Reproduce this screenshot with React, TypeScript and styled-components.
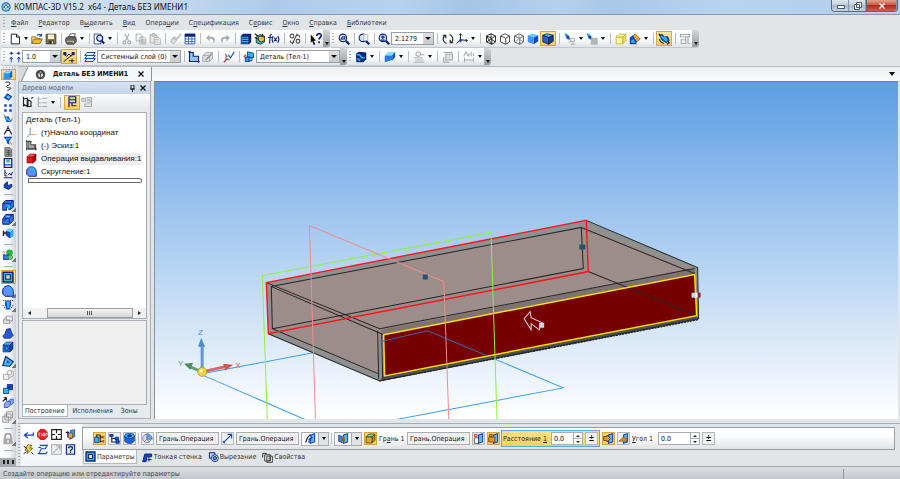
import React from "react";
import styled, { createGlobalStyle, css } from "styled-components";

const Global = createGlobalStyle`
  * { box-sizing: border-box; }
  body { margin: 0; font-family: "DejaVu Sans Condensed", "DejaVu Sans", sans-serif; font-size: 7px; line-height: 10px; color: #222; }
  button, input, select { font: inherit; color: inherit; margin: 0; padding: 0; border: 0; background: none; border-radius: 0; min-width: 0; }
`;

/* ---------- icons ---------- */
const B = "#1546c8";
const N = "#0b2278";
const C = "#25b9f2";
const G = "#a9acb0";
const K = "#222";

const cube = (a: string, b: string, c: string, s = N) => (
  <g stroke={s} strokeWidth="1" strokeLinejoin="round">
    <path d="M1.5 5.5h9v9h-9z" fill={b} />
    <path d="M1.5 5.5l4-4h9l-4 4z" fill={a} />
    <path d="M10.5 5.5l4-4v9l-4 4z" fill={c} />
  </g>
);
const wire = (s: string, inner: React.ReactNode) => (
  <g stroke={s} strokeWidth="1.2" fill="none">
    <path d="M2 4l6-3 6 3v8l-5 3-7-3zM2 4l7 3 5-3M9 7v8" />{inner}
  </g>
);
const lens = (inner: React.ReactNode) => (
  <g fill="none" stroke={N} strokeWidth="1.4">
    <path d="M10.5 10.5L15 15" strokeWidth="3" />
    <circle cx="6.5" cy="6.5" r="5" fill="#cfe6fb" />{inner}
  </g>
);
const arrowPlane = (extra: React.ReactNode) => (
  <g>
    <path d="M8 3l6-2v12l-6 2z" fill="#5ab3ff" stroke={B} strokeWidth="1.5" />{extra}
  </g>
);

const icons: Record<string, React.ReactNode> = {
  logo: <g><circle cx="8" cy="8" r="7.5" fill="#1b76b8" /><circle cx="8" cy="8" r="5" fill="none" stroke="#fff" /><path d="M5 5l3 3 3-3M8 8v4M5 11l3-3 3 3" stroke="#fff" strokeWidth="1.4" fill="none" /></g>,
  newDoc: <path d="M3 1.5h7l4 4v9H3zM10 1.5v4h4" fill="#fff" stroke={K} strokeWidth="1.3" />,
  open: <g stroke="#7a5c10"><path d="M1 14V5h5l1 2h5v2" fill="#f6dd7a" /><path d="M1 14l3-6h11l-3 6z" fill="#e6b730" /><path d="M8 3c3-2 5-1 6 1m0-3v3h-3" fill="none" stroke={B} strokeWidth="1.5" /></g>,
  save: <g><path d="M1.5 1.5h13v13h-13z" fill="#8d7a35" stroke="#333" /><path d="M4 2h8v6H4z" fill="#f4f0d8" /><path d="M5 10h7v4H5z" fill="#333" /><path d="M9 11h2v3H9z" fill="#eee" /></g>,
  print: <g stroke="#333"><path d="M5 5l2-4h7l-2 4z" fill="#fff" /><path d="M1 7l3-2h10l1 3v4l-3 3H3l-2-3z" fill="#666" /><path d="M2 11h9" stroke="#ddd" /><path d="M10 12h2" stroke="#e5c733" strokeWidth="2" /></g>,
  preview: <g><path d="M1.5 1.5h9v13h-9z" fill="#fff" stroke={N} /><circle cx="9" cy="7" r="4" fill="#cce4fa" stroke={N} strokeWidth="1.5" /><path d="M11 10l4 4" stroke={N} strokeWidth="2.6" /></g>,
  cut: <g stroke={G} fill="none" strokeWidth="1.5"><path d="M5 1l5 9M11 1L6 10" /><circle cx="4.5" cy="12.5" r="2" /><circle cx="11" cy="12.5" r="2" /></g>,
  copy: <g stroke={G} fill="#f5f5f5" strokeWidth="1.3"><path d="M1.5 1.5h6l2 2v7h-8zM6.5 5.5h6l2 2v7h-8z" /><path d="M8 9h5M8 11h5M8 13h5" /></g>,
  paste: <g stroke={G} fill="#e7e7e7" strokeWidth="1.3"><path d="M1.5 2.5h9v11h-9z" /><path d="M4 1h4v3H4z" /><path d="M7 6h6l2 2v7H7z" fill="#f8f8f8" /><path d="M8 9h5M8 12h5" /></g>,
  brush: <g stroke={G} fill="#ddd"><path d="M10 6l4-5 1 1-4 5z" /><path d="M3 7l6 2 2-2-5-2z" /><path d="M3 7l-2 5 4 3 4-6z" /></g>,
  table: <g><path d="M1.5 1.5h13v13h-13z" fill="#fff" stroke={B} /><path d="M1 1h14v4H1z" fill={N} /><path d="M6 5v10M10.5 5v10M1 8h14M1 11.5h14" stroke={B} /></g>,
  undo: <path d="M6 2L1.5 6.5 6 11V8c4-1 6 1 5 6 5-6 1-10-5-9z" fill={G} />,
  redo: <path d="M10 2l4.5 4.5L10 11V8c-4-1-6 1-5 6-5-6-1-10 5-9z" fill={G} />,
  manager: <g><path d="M1 4l3-3h11v11l-3 3H1z" fill={N} /><path d="M2 5h9v9H2z" fill={C} /><path d="M3 7h7M3 10h7M3 13h7" stroke={N} strokeWidth="1.5" /></g>,
  lib: <g stroke={K}><path d="M3 5l5-3 6 2v8l-5 3-6-2z" fill="#30b5c7" /><path d="M6 5l4-1 4 2v4l-4 2-4-2z" fill="#f0bf2d" /><path d="M1 1l4 3M1 6l4 2M12 1l-2 4" strokeWidth="1.5" /></g>,
  fx: <g fill="none" stroke={N} strokeWidth="1.5"><path d="M5 2c-3-1-2 4-3 12M0 6h5M7 4c-2 3-2 6 0 9M8 6l4 5M12 6l-4 5M13 4c2 3 2 6 0 9" /></g>,
  percent: <g fill="none" stroke="#444" strokeWidth="1.4"><circle cx="4" cy="4" r="2.5" /><circle cx="12" cy="11" r="2.5" /><path d="M11 1L4 15M9 4c3-3 6 0 5 2M7 12c-3 3-6 0-5-2" /></g>,
  help: <g><path d="M1 2l7 8-3 .5L7 15l-2 1-2-5-2 2z" fill="#111" /><path d="M9 4c0-4 6-4 6-.5 0 2.5-3 2.5-3 5M12 11v2.5" stroke={N} strokeWidth="2.2" fill="none" /></g>,
  zoomWin: lens(<path d="M4 8h5V5H6.5z" />),
  zoomPage: <g>{lens(null)}<path d="M7 2h6v8H7z" fill="#eee" stroke={G} /></g>,
  zoomPm: lens(<path d="M4 5.5h5M6.5 3v5M4 9.5h5" />),
  rotate: <g fill="none" stroke={K} strokeWidth="1.6"><path d="M6 14C1 12 0 6 4 3M10 2c5 2 6 8 2 11" /><path d="M1 3h4v4M15 13h-4V9" /></g>,
  axes: <g fill="none" stroke={K} strokeWidth="1.3"><path d="M6 1v8l9 1M6 9l-5 5M4 3l2-2 2 2M13 8l2 2-2 2" /><circle cx="6" cy="10" r="1.5" fill={B} stroke={B} /></g>,
  wire1: wire(K, <path d="M8 1v7l-6 4M8 8l6 4M2 4l7 11" />),
  wire2: wire("#444", null),
  wire3: wire("#555", <path d="M8 1v7l-6 4M8 8l6 4" stroke="#999" />),
  shaded: <g><path d="M1 3l6-2 8 2-6 3z" fill="#5ed0ff" /><path d="M1 3l8 3v9l-8-3z" fill="#4390ff" /><path d="M9 6l6-3v8l-6 4z" fill="#1647c4" /></g>,
  shadedEdge: <g stroke="#08184a" strokeLinejoin="round"><path d="M1 3l6-2 8 2-6 3z" fill="#35c4f4" /><path d="M1 3l8 3v9l-8-3z" fill="#1e62dd" /><path d="M9 6l6-3v8l-6 4z" fill="#133a9c" /></g>,
  light: <g><path d="M1 1l6 3 1 5-4-1z" fill={B} /><path d="M1 1l4 2" stroke={C} strokeWidth="2" /><path d="M6 12h4M9 7h5v4H9zM12 11v4M9 15h6" stroke={G} fill="none" strokeWidth="1.3" /></g>,
  lightCube: <g><path d="M1 1l6 3 1 5-4-1z" fill={B} /><path d="M1 1l4 2" stroke={C} strokeWidth="2" /><path d="M7 7h8v8H7z" fill="#b6b6b6" stroke={G} /></g>,
  yellowCube: cube("#fbf594", "#fdf7a8", "#f1e561", "#c2ab20"),
  section: <g><path d="M5 5l3-4 7 7-5 4z" fill="#e8a52b" stroke="#8a5a10" /><path d="M1 6l4-3 5 8v4H1z" fill={B} /><path d="M3 10l3-2 2 5H3z" fill={C} /></g>,
  simplify: <g><path d="M2 3l4-1 2 3 5 0 2 5-4 3-6-4z" fill={B} stroke={N} /><path d="M4 4l8 7M8 5l4 4" stroke={C} strokeWidth="2.5" /><path d="M13 11l2 2-3 2M2 8c0 4 3 5 6 6M1 1l3 3" stroke={K} strokeWidth="1.5" fill="none" /></g>,
  plane: <g fill="none" stroke={G} strokeWidth="1.6"><path d="M2 2h12v3H2zM9 5v9H3V9h6M12 5v9h3" /></g>,
  step: <g stroke={B} strokeWidth="1.3" fill="none"><path d="M3 1v4M1 3h5M13 1v4M10 3h5" stroke={N} /><path d="M3 8v7M13 8v7M1 11l2-3 2 3M11 11l2-3 2 3" /></g>,
  snaps: <g stroke={N} strokeWidth="1.3" fill="none"><path d="M1 14L15 3M1 4l4 3 3-3 3 3M8 13h7M12 10v6" /><path d="M1 2h3v3H1zM12 2h3v3h-3z" fill="#333" /></g>,
  layers: <g stroke={B} fill="#eef4ff" strokeWidth="1.3"><path d="M1 14l3-4h11l-3 4zM1 10l3-4h11l-3 4zM1 6l3-4h11l-3 4z" /></g>,
  sketch: <g><path d="M2 2h5v5h7v7H2z" fill="#91c6f3" stroke={N} strokeWidth="1.5" /><path d="M0 1h4M2 0v4M12 14h4M14 12v4" stroke={N} /></g>,
  sketchGray: <g stroke="#999" fill="#ddd"><path d="M1 6l4-4h9v8l-4 4H1zM1 6h9v8M10 6l4-4" /><path d="M5 12l8-8" strokeWidth="2" /></g>,
  lcs: <g fill="none" strokeWidth="1.5"><path d="M4 7v4l5 1" stroke="#27964d" /><path d="M1 15l5-5" stroke="#cc2d2d" /><path d="M7 5l3 4 5-8" stroke={B} /><path d="M3 4l3 4" stroke="#cc2d2d" /></g>,
  bodies: <g stroke={N}><path d="M6 1l8 2v6l-8-1z" fill={C} /><path d="M3 8h6v6H3z" fill="#2e9ae2" /><path d="M8 9h4v4H8z" fill="#6fdcff" /><path d="M1 8l3-3" stroke="#d7392e" strokeWidth="2" /></g>,
  hatch: <g><path d="M1 4l4-3 10 1v9l-4 4H2z" fill={N} /><path d="M2 5l4 0 3 4h4M3 10l4 3" stroke={C} strokeWidth="2.2" fill="none" /></g>,
  face: <g><path d="M1 6l5-5h9l-4 5z" fill="#7be3fb" /><path d="M1 6h10v6l-10 3z" fill="#277be9" /><path d="M11 6l4-5v7l-4 5z" fill="#194db5" /></g>,
  grayA: <g fill="none" stroke={G} strokeWidth="1.4"><circle cx="7" cy="4" r="3" /><path d="M1 9h12M3 12h11M1 15h14M10 5h5" /></g>,
  grayB: <g fill="#ddd" stroke={G} strokeWidth="1.4"><path d="M5 4h9v8H5zM2 8v7h8M2 2h12" /></g>,
  grayC: <g fill="none" stroke={G} strokeWidth="1.4"><path d="M1 7l3-6 3 6M8 7V3M11 1v6M14 3v4M2 9v6M14 9v6M2 12h12" /></g>,
  part: <g><circle cx="8" cy="8" r="7" fill="#555" /><path d="M4 5l4-2 4 2v6l-4 2-4-2zM4 5l4 2 4-2M8 7v6" fill="#ddd" stroke="#222" /></g>,
  blueCube: cube("#8feaff", "#3490ef", "#1f5cc9", "#3490ef"),
  curve: <path d="M4 2c10-2 8 4 4 5s-2 4 3 4-2 4-4 4" fill="none" stroke={K} strokeWidth="1.6" />,
  diamond: <g><path d="M1 9l6-7 8 5-6 7z" fill={B} /><path d="M5 8l3-3 4 3-3 3z" fill="#61c7ff" /></g>,
  dots: <path d="M2 2h4v4H2zM10 2h4v4h-4zM2 10h4v4H2zM10 10h4v4h-4z" fill={B} />,
  orbit: <g><path d="M2 4l7 0 4 8-7 1z" fill={B} /><path d="M4 6l7 5" stroke={C} strokeWidth="3" /><path d="M1 1l3 3M12 13l3-6" stroke={K} /></g>,
  compass: <path d="M8 1v4M8 4L2 15M8 4l6 11M4 10c3-2 5-2 8 0" fill="none" stroke={K} strokeWidth="1.7" />,
  filter: <g><path d="M1 1h14l-5 7v6l-4-3V8z" fill={B} /><path d="M4 3h8L9 6H6z" fill={C} /><path d="M12 10l2 4" stroke="#da901e" strokeWidth="2" /></g>,
  docs: <g fill="#999" stroke="#333"><path d="M3 1h8l3 3v11H3z" /><path d="M5 6h7M5 9h7M5 12h7M9 5v9" /></g>,
  window: <g><path d="M2 1h12v14H2z" fill="#fff" stroke={N} strokeWidth="2" /><path d="M5 2h6v5H5z" fill={C} /><path d="M3 11h10" stroke={B} strokeWidth="2" /></g>,
  measure: <g fill="none" stroke={N} strokeWidth="1.6"><path d="M3 1v10l4 0M1 14h14M8 9l3-2 2 3 2-5" /><path d="M3 4l3 4" stroke={B} /></g>,
  elbow: <path d="M2 7l5-4v6l7-2v4l-5 4-7-3z" fill={B} stroke={N} strokeWidth="1.5" />,
  extrude: <g><path d="M1 6l4-4h10v9l-4 3H9v-3H6v4H1z" fill="#2d74e8" stroke={N} strokeWidth="1.3" /><path d="M1 6h10l4-4M11 6v8" stroke={N} fill="none" /><path d="M6 8h5v5H8z" fill={C} /></g>,
  revolve: <g><path d="M1 8l4-6h10v8l-5 5H1z" fill="#2d74e8" stroke={N} strokeWidth="1.3" /><path d="M4 10V7h5l4-4M10 8v5" stroke={N} strokeWidth="1.5" fill="none" /><path d="M6 5h5" stroke="#8dcaff" strokeWidth="1.6" /></g>,
  cutout: <g><path d="M5 5l5-3 5 2v8l-5 3-5-4z" fill={B} /><path d="M5 5l5-3 5 2-4 3z" fill="#60e3ff" /><path d="M11 7l4-3v8l-4 3z" fill={C} /><path d="M2 5v7M1 8h5" stroke={K} strokeWidth="2" /></g>,
  boolean: <g><circle cx="10" cy="5" r="4.5" fill="#29b44a" /><path d="M2 8h7v6H2z" fill="#3182e2" stroke={N} /><path d="M1 3l3 2M1 7h3" stroke="#555" /><circle cx="11" cy="11" r="3" fill="#6fcc6f" stroke="#28793e" /></g>,
  shell: <g><path d="M1.5 1.5h13v13h-13z" fill={C} stroke={N} strokeWidth="2" /><path d="M5 5h6v6H5z" fill="#f5dc8b" stroke={N} strokeWidth="1.5" /></g>,
  fillet: <g><path d="M1 6c1-3 4-5 7-5 4 0 7 4 7 8v6H4l-3-3z" fill="#5c90ff" stroke={N} strokeWidth="1.3" /><path d="M6 3c4 0 7 3 7 8" stroke={C} strokeWidth="2.2" fill="none" /></g>,
  draft: <g><path d="M4 3h8v5l-2 6H6L4 8z" fill={B} /><path d="M1 2h14M1 8l4 6M15 8l-4 6" stroke={N} strokeDasharray="2 1" fill="none" /><path d="M6 4h4v8H7z" fill={C} /></g>,
  rib: <g fill="#ddd" stroke="#999"><path d="M2 9l4-5h8v6l-4 4H2zM6 4v6h8M2 9h8v5" /></g>,
  loft: <path d="M1 12l3-3 2-6 5-1 2 6 2 3-4 4H3z" fill="#255bd2" stroke={N} />,
  box: <g>{cube("#35b8ff", "#2272e5", "#163fa6")}<path d="M4 8h4v4H4z" fill={C} stroke={N} /></g>,
  pen: <g><path d="M1 14l4-12 10 7-5 6z" fill="#48b9ec" stroke={N} strokeWidth="1.5" /><path d="M6 11l1-4 4 3z" fill={B} /></g>,
  grayCubes: <g fill="#eee" stroke="#999"><path d="M2 7h7v7H2zM6 7l4-4h5v6l-6 3" /><circle cx="10" cy="5" r="3" /></g>,
  cubes: <g stroke={N}><path d="M7 2h7v7H7z" fill={B} /><path d="M2 7h7v7H2z" fill={C} /><path d="M9 7l3-3" /></g>,
  copies: <g stroke={B} fill="#8da6ee"><path d="M3 9l3-3h5v5l-3 3H3zM8 6l3-3h4v5l-3 3" /><path d="M1 6l5-5M2 1l4 0v4" strokeWidth="1.5" stroke={K} fill="none" /></g>,
  copiesGray: <g stroke="#999" fill="#eee" strokeWidth="1.3"><path d="M6 1h8v8H6zM4 4h8v8H4zM1 7h8v8H1z" /></g>,
  lock: <g><path d="M4 8V4c0-4 8-4 8 0v4" fill="none" stroke="#999" strokeWidth="2" /><path d="M2 7h12v8H2z" fill="#aaa" /><path d="M8 9v4" stroke="#eee" strokeWidth="2" /></g>,
  treeA: <g stroke={K} fill="none" strokeWidth="1.5"><path d="M2 1v13M2 4l5-1v11l-5-3M8 5l4 2v7H8zM12 3l3-1" /></g>,
  treeB: <g stroke={G} fill="none" strokeWidth="1.5"><path d="M3 1v13h4M3 4h4M3 9h4" /><path d="M8 3h7M8 9h7M8 14h7" /></g>,
  treeC: <g stroke={N} fill="#e6d9a2" strokeWidth="1.6"><path d="M4 1h9v8H4zM4 5h9M4 1v14M8 9v4h6" /></g>,
  treeD: <g stroke={G} fill="#ddd" strokeWidth="1.3"><path d="M1 3h5v4H1zM7 2h7v12H5v-4M8 5h4M8 9h4M10 4l4 5" /></g>,
  origin: <g fill="none"><path d="M6 1v10" stroke="#5588b0" strokeWidth="1.3" /><path d="M6 11h9" stroke="#e88" strokeWidth="1.3" /><path d="M6 11l-5 4" stroke="#6aa878" strokeWidth="1.3" /></g>,
  sketchTree: <g fill="#aaa" stroke="#333" strokeWidth="1.3"><path d="M3 2h4v5h6v6H3z" /><path d="M1 0v15M0 2h8M0 13h16M14 6v9" fill="none" /></g>,
  redCube: cube("#ff5656", "#e01a20", "#a00a10", "#8c0a10"),
  enter: <path d="M15 5v4H3M7 5L2 9l5 4" fill="none" stroke={B} strokeWidth="1.8" />,
  stop: <g><path d="M5 0h6l5 5v6l-5 5H5l-5-5V5z" fill="#e21b22" /><path d="M2 6h3M2 8h2M4 10H2M7 6v5M9 6h2v4H9zM13 11V6h2v3" stroke="#fff" fill="none" /></g>,
  frame: <g fill="none" stroke={K} strokeWidth="1.7"><path d="M1 1h14v14H1zM8 1v5M8 10v5M1 8h5M10 8h5" /></g>,
  bodyTool: <g><path d="M8 2l6-1v10l-7 4z" fill="#3ba0e8" stroke={N} /><path d="M5 6h6v7H5z" fill="#eaae38" stroke="#5b4a18" /><path d="M1 5h5M4 3v9" stroke={N} strokeWidth="1.5" /></g>,
  flash: <g><path d="M7 1l6 1-3 4h4L6 14l1-5H3z" fill="#f9dc24" stroke="#333" /><path d="M1 3l5 4M1 14l4-3M12 12l3 3" stroke={K} strokeWidth="1.4" /></g>,
  contour: <path d="M4 2h11l-3 5H6l-3 7h10l2-3M2 5h4M1 14h3" fill="none" stroke={B} strokeWidth="1.6" />,
  slashBox: <g stroke={G} fill="#eee" strokeWidth="1.5"><path d="M1 1h14v14H1zM3 13L13 3M7 3h6v6" /></g>,
  helpBox: <g><path d="M2 1h12v14H2z" fill="#c9e7fa" stroke={N} strokeWidth="1.6" /><path d="M5 6c0-3 6-3 6 0 0 2-3 2-3 4M8 11v2" fill="none" stroke={K} strokeWidth="1.8" /></g>,
  treeSel: <g><path d="M1 6h6v8H1z" fill={C} stroke={N} /><path d="M4 6V3h4M9 2v12M9 6h5M9 12h5" stroke={K} strokeWidth="1.6" fill="none" /><path d="M12 4h3v4h-3zM12 10h3v4h-3z" fill="#a56c19" /></g>,
  treeSel2: <g stroke={N} fill={B}><path d="M1 2h5v3H1z" /><path d="M4 5v8h6M4 8h6" fill="none" strokeWidth="1.6" /><path d="M9 6h5v4H9zM10 11h5v4h-5z" /></g>,
  cylinder: <g stroke={N}><path d="M1 4v8l4 3h6l4-3V4z" fill="#1763e2" /><ellipse cx="8" cy="4" rx="7" ry="3.5" fill={C} /><ellipse cx="8" cy="4" rx="3" ry="1.3" fill={N} /></g>,
  pie: <g stroke="#667" fill="#d9dde8"><circle cx="7" cy="8" r="6" /><path d="M7 1c4 0 8 3 8 8H7z" fill="#5aa3ff" /><path d="M7 9l-4 4M7 9l4 5" /></g>,
  diag: <path d="M2 14L13 3M8 2h6v6M1 12l3 3" stroke={B} strokeWidth="1.6" fill="none" />,
  faceSel: arrowPlane(<path d="M1 14c1-6 2-8 6-11l3 4-4 2v6" fill="#fff" stroke={N} strokeWidth="1.5" />),
  planeSel: arrowPlane(<g><path d="M1 3l5 2v9l-5-2z" fill="#3a8cf4" stroke={N} /><path d="M5 6h5v6H5z" fill="#a5631c" /></g>),
  goldBox: cube("#79c9bd", "#dba92e", "#c18b18", "#3a3311"),
  faceDoc: arrowPlane(<g><path d="M2 7h6v8H2z" fill="#fff" stroke={K} /><path d="M2 2h4v3H2z" fill="#fff" stroke="#e02a1e" strokeWidth="1.3" /></g>),
  faceGold: arrowPlane(<path d="M1 6h9v7H1zM2 2h4v3H2z" fill="#dc9d25" stroke="#8e381d" strokeWidth="1.3" />),
  faceDir: arrowPlane(<path d="M1 5h5V3l5 5-5 5v-2H1z" fill="#dc9d25" stroke="#6b3d0a" strokeWidth="1.3" />),
  faceAngle: arrowPlane(<path d="M1 12l7-6 5 2v4z" fill="#d29129" stroke="#885019" />),
  thin: <path d="M1 14l3-11h10v4H7l-1 7zM10 7v7M8 11h6" fill={B} stroke={N} strokeWidth="1.4" />,
  minusBody: <g stroke={N} strokeWidth="1.4"><path d="M2 1h8v8H2z" fill="#b7cbfa" /><circle cx="10" cy="9" r="5" fill="#fff" /><circle cx="10" cy="9" r="2.5" fill={C} /></g>,
  props: <g stroke={K} fill="#fff" strokeWidth="1.3"><path d="M1 2h6M1 2v6M4 4h8v9H4zM7 6h8v9H7zM9 9h4M9 12h4" /></g>,
};

const Svg = styled.svg<{ $s: number }>`
  width: ${(p) => p.$s}px; height: ${(p) => p.$s}px; display: block; flex: none;
`;
const Icon = ({ n, s = 12 }: { n: string; s?: number }) => (
  <Svg $s={s} viewBox="0 0 16 16" aria-hidden="true">{icons[n]}</Svg>
);

/* ---------- window frame ---------- */
const Window = styled.div`
  display: flex; flex-direction: column; height: 100vh; overflow: hidden; background: #e2e5e8; white-space: nowrap;
`;
const TitleBar = styled.header`
  display: flex; align-items: center; gap: 3px; height: 15px; padding-left: 1px; color: #111;
  font-family: "Noto Sans", "Open Sans", sans-serif; font-size: 8px;
  border-bottom: 1px solid #8d97a3;
  background: linear-gradient(100deg, #d9e7f5 0%, #c2d8ee 20%, #adcbe9 30%, #b7d2ee 44%, #a5c5e6 52%, #b5d0ec 62%, #a8c8e8 68%, #b8d3ee 80%, #b2cfec 100%);
`;
const WinControls = styled.div`
  display: flex; align-self: flex-start; margin-left: auto; margin-right: 2px; height: 12px;
  border: 1px solid #5d6b7c; border-top: 0; border-radius: 0 0 4px 4px; overflow: hidden;
`;
const WinButton = styled.button<{ $close?: boolean }>`
  display: grid; place-items: center; width: ${(p) => (p.$close ? 31 : 17)}px;
  border-left: ${(p) => (p.$close ? 1 : 0)}px solid #5d6b7c; box-shadow: inset -1px 0 #8796a8;
  background: ${(p) => p.$close ? "linear-gradient(#e2a193, #cb5845 45%, #b02a1b 50%, #d2604d)" : "linear-gradient(#dbe6f1, #c2d0df 45%, #a8bace 50%, #c3d3e3)"};
`;
const MenuBar = styled.nav` display: flex; align-items: center; height: 15px; padding-left: 1px; `;
const MenuList = styled.div` display: flex; gap: 10px; padding-left: 3px; `;
const MenuButton = styled.button` color: #33373d; u { text-underline-offset: 1px; } `;
const Grip = styled.i<{ $h?: boolean }>`
  flex: none; align-self: center; width: ${(p) => (p.$h ? 11 : 2)}px; height: ${(p) => (p.$h ? 1 : 11)}px; margin: ${(p) => (p.$h ? "1px auto" : "0 3px 0 2px")};
  background: repeating-linear-gradient(${(p) => (p.$h ? "90deg" : "180deg")}, #a9afb6 0 1px, transparent 1px 3px);
`;

/* ---------- tool bars ---------- */
const ToolRow = styled.div` display: flex; height: 18px; padding: 0 0 1px 1px; `;
const Toolbar = styled.div`
  display: flex; align-items: center; border-radius: 3px; overflow: hidden;
  background: linear-gradient(#fff, #fafbfc 55%, #dfe3e7); box-shadow: 0 1px #c3c8cd;
`;
const Cap = styled.button`
  align-self: stretch; width: 7px; margin-left: auto; display: grid; place-items: end center; padding-bottom: 2px;
  background: linear-gradient(#d2d5d9, #989da3);
  &::after { content: ""; border: 2px solid transparent; border-top: 3px solid #111; border-bottom: 0; }
`;
const activeSkin = css` background: linear-gradient(#fde9a8, #fbcf59); box-shadow: inset 0 0 0 1px #d7a63d; `;
const Tool = styled.button<{ $on?: boolean }>`
  display: grid; place-items: center; flex: none; height: 15px; width: ${(p) => (p.$on ? 16 : 14)}px;
  ${(p) => p.$on && activeSkin}
`;
const Drop = styled.button`
  width: 8px; height: 15px; flex: none; display: grid; place-items: center;
  &::after { content: ""; border: 2px solid transparent; border-top: 3px solid #111; border-bottom: 0; }
`;
const Sep = styled.i<{ $wide?: boolean }>`
  flex: none; width: 1px; height: 11px; background: #b9bdc3; margin: 0 ${(p) => (p.$wide ? 3 : 2)}px 0 3px;
`;
const ComboBox = styled.span<{ $w: number }>`
  display: flex; flex: none; width: ${(p) => p.$w}px; height: 13px; border: 1px solid #999fa6; background: #fff; position: relative;
  &::after {
    content: ""; position: absolute; right: 2px; top: 4px; border: 3px solid transparent; border-top-color: #111; border-bottom: 0;
  }
`;
const Select = styled.select`
  appearance: none; flex: 1; padding: 0 11px 0 3px; color: #111;
  background: linear-gradient(#dfe1e4, #c8cbcf) right / 10px 100% no-repeat;
`;
const Combo = ({ w, label, value }: { w: number; label: string; value: string }) => (
  <ComboBox $w={w}><Select aria-label={label}><option>{value}</option></Select></ComboBox>
);

/* "|" and "||" are separators, "v" a drop-down arrow, "*" marks a pressed tool */
const Tools = ({ list }: { list: string }) => (
  <>
    {list.split(" ").map((t, i) => {
      if (t === "|") return <Sep key={i} />;
      if (t === "||") return <Sep key={i} $wide />;
      if (t === "v") return <Drop key={i} aria-label="Ещё" />;
      const on = t.startsWith("*");
      const n = on ? t.slice(1) : t;
      return <Tool key={i} $on={on} aria-label={n} aria-pressed={on}><Icon n={n} /></Tool>;
    })}
  </>
);

/* ---------- side rail ---------- */
const Body = styled.div` display: flex; flex: 1; min-height: 0; `;
const Rail = styled.aside`
  display: flex; flex-direction: column; flex: none; width: 16px; margin-right: 2px;
  background: linear-gradient(90deg, #fff, #f4f5f7 60%, #cdd2d8);
`;
const RailGroup = styled.div<{ $grow?: boolean }>`
  display: flex; flex-direction: column; align-items: center; justify-content: space-around;
  flex: ${(p) => (p.$grow ? 1 : "none")};
`;
const RailTool = styled.button<{ $small?: boolean; $on?: boolean; $more?: boolean }>`
  display: grid; place-items: center; width: 15px; height: ${(p) => (p.$small ? 11 : 14)}px;
  ${(p) => p.$more && "background: linear-gradient(135deg, transparent 50%, #777 50%) right bottom / 4px 4px no-repeat;"}
  ${(p) => p.$on && activeSkin}
`;
const RailSep = styled.i` flex: none; width: 9px; height: 1px; margin: 4px auto 3px; background: #aeb3b9; `;
const RailEnd = styled.div`
  display: flex; align-items: center; justify-content: space-evenly; height: 8px; margin-top: 4px; background: #a5aab0;
  i { width: 2px; height: 4px; background: #222; }
`;

/* ---------- document area ---------- */
const Work = styled.div` display: flex; flex-direction: column; flex: 1; min-width: 0; `;
const TabStrip = styled.div`
  display: flex; align-items: center; height: 15px; border-top: 1px solid #b5babf;
  background: linear-gradient(#eceef0, #fbfcfd);
`;
const DocTab = styled.div`
  display: flex; align-items: center; gap: 7px; height: 14px; width: 134px; padding: 0 6px 0 17px;
  background: linear-gradient(115deg, #d7dade 8px, #8b929a 9px, #fff 10px, #f2f5fa);
  border-right: 1px solid #8b929a; font-weight: 700; color: #111;
`;
const CloseX = styled.button`
  margin-left: auto; display: grid; place-items: center; width: 9px; height: 10px;
`;
const StripMenu = styled.button`
  margin-left: auto; width: 16px; height: 12px; display: grid; place-items: center;
  &::after { content: ""; border: 3px solid transparent; border-top: 4px solid #111; border-bottom: 0; }
`;
const Doc = styled.div` display: flex; flex: 1; min-height: 0; padding: 0 2px 0 0; `;
const TreePanel = styled.section`
  display: flex; flex-direction: column; flex: none; width: 133px; margin-right: 3px; border: 1px solid #a7b0ba; background: #e6e9ed;
`;
const PanelHead = styled.div`
  display: flex; align-items: center; gap: 3px; height: 12px; padding: 0 4px 0 3px; color: #5b6878;
  background: linear-gradient(#d6e2f0, #c6d5e8);
`;
const TreeTools = styled.div`
  display: flex; align-items: center; height: 16px; padding-left: 2px; background: linear-gradient(#fbfcfd, #e4e7eb);
`;
const TreeBox = styled.div`
  display: flex; flex-direction: column; flex: 1; margin: 2px 3px 1px; border: 1px solid #a9aeb4; background: #fff; min-height: 0;
`;
const Tree = styled.ul`
  list-style: none; margin: 0; padding: 0 0 0 3px; flex: 1; color: #111;
  font-family: "Liberation Sans", Arial, sans-serif; font-size: 8px;
`;
const TreeItem = styled.li<{ $on?: boolean }>`
  display: flex; align-items: center; gap: 4px; height: 13px;
  span { padding: 1px 1px 1px 0; background: ${(p) => (p.$on ? "#eee" : "none")}; }
`;
const TreeEnd = styled.li`
  width: 114px; height: 5px; margin-left: 2px; border: 1px solid #666; border-radius: 1px 3px 3px 1px; background: #fff;
`;
const HScroll = styled.div`
  display: flex; align-items: center; height: 10px; padding: 0 3px; background: #f1f1f2;
`;
const ScrollArrow = styled.button<{ $right?: boolean }>`
  border: 2px solid transparent; margin: 0 2px;
  ${(p) => (p.$right ? "border-left: 3px solid #222; border-right: 0;" : "border-right: 3px solid #222; border-left: 0;")}
`;
const Track = styled.div` flex: 1; display: flex; padding: 0 3px 0 14px; `;
const Thumb = styled.button`
  flex: 1; height: 10px; border: 1px solid #9b9fa4; background: linear-gradient(#f6f6f7, #d2d4d7); display: grid; place-items: center;
  &::after { content: ""; width: 6px; height: 4px; background: repeating-linear-gradient(90deg, #555 0 1px, transparent 1px 2px); }
`;
const Preview = styled.div` height: 85px; margin: 0 3px; border: 1px solid #a9aeb4; background: #efefef; `;
const PanelTabs = styled.div` display: flex; height: 13px; padding-left: 3px; gap: 2px; `;
const PanelTab = styled.button<{ $on?: boolean }>`
  padding: 0 3px; height: 12px; color: #333; ${(p) => p.$on && "background: #fff; border: 1px solid #b5babf; border-top: 0; padding: 0 2px;"}
`;
const View = styled.main`
  flex: 1; min-width: 0; border-top: 1px solid #777d85; border-left: 1px solid #8b929a;
  background: linear-gradient(#5c9de3, #9cc4ef 38%, #d9e8f8 76%, #fff);
  svg { display: block; width: 100%; height: 100%; }
`;

const Scene = () => (
  <svg viewBox="155 82 743 336" preserveAspectRatio="xMinYMin slice" role="img" aria-label="Модель детали" fontFamily="Liberation Sans, sans-serif">
    <defs>
      <pattern id="dots" width="4" height="4" patternUnits="userSpaceOnUse">
        <path d="M0 0h1v1H0zM2 2h1v1H2z" fill="#b8736b" opacity=".6" />
      </pattern>
      <pattern id="redDots" width="4" height="4" patternUnits="userSpaceOnUse">
        <path d="M0 0h1v1H0zM2 2h1v1H2z" fill="#3c0808" opacity=".7" />
      </pattern>
    </defs>
    <path d="M202 373L427 330 562 387 393 419M202 374L308 420" fill="none" stroke="#3b9ff2" />
    <path d="M266 282L585 220 696 267 697 318 379 380 268 333z" fill="#8f9090" />
    <path d="M271 286L580 227 582 268 693 268 380 328 378 372 272 328z" fill="#9b8f8d" />
    <path d="M580 227L585 228 693 270 383 332 271 286z" fill="#9b8f8d" />
    <path d="M271 286L585 227 693 270 383 332 378 374 272 328z" fill="url(#dots)" />
    <path d="M380 329L693 268 694 274 383 334z" fill="#7d7472" />
    <path d="M384 374L695 315 697 319 379 380z" fill="#4b4e52" />
    <path d="M383 334L693 274 695 315 384 375z" fill="#7c0000" />
    <path d="M383 334L693 274 695 315 384 375z" fill="url(#redDots)" />
    <g fill="none" stroke="#262626" strokeWidth="1">
      <path d="M266 282L379 328 693 268M271 286L383 334M271 286L272 328 378 373M271 286L580 227 582 268 272 328" />
      <path d="M585 220L696 267 697 318 379 380 268 333M580 227L693 273M587 271L695 315M377 330L378 378M381 333L382 378" />
    </g>
    <path d="M379 380L697 319" stroke="#222" strokeDasharray="2 1" />
    <path d="M266 282L585 220 587 271 268 333z" fill="none" stroke="#fb1318" strokeWidth="1.4" />
    <path d="M383 334L693 274 695 315 384 375z" fill="none" stroke="#ffe000" strokeWidth="1.4" />
    <g fill="none">
      <path d="M267 419L262 275 490 232 496 419" stroke="#8cf23a" />
      <path d="M315 419L309 225 443 281 448 419" stroke="#f28c8c" />
      <path d="M379 341L427 330 486 355" stroke="#2b7fc9" opacity=".8" />
      <path d="M379 341V379" stroke="#3b9ff2" />
    </g>
    <path d="M422 274h5v5h-5zM578 244h6v5h-6z" fill="#1e5673" />
    <path d="M538 322h5v5h-5zM690 292h5v5h-5z" fill="#b9dcf4" />
    <path d="M695 292h4v5h-4z" fill="#882b27" /><path d="M694 292h2v5h-2z" fill="#fff" />
    <path d="M523 318L529 311 530 317 541 322 538 329 530 323 530 329z" fill="none" stroke="#e6d7d7" />
    <g>
      <path d="M202 371V345" stroke="#5b9bd8" strokeWidth="3" /><path d="M198 346L201 337 205 346z" fill="#4c8dcf" />
      <path d="M202 371L224 366" stroke="#d96767" strokeWidth="3" /><path d="M223 363L233 364 225 370z" fill="#d45353" />
      <path d="M202 371L190 366" stroke="#64a074" strokeWidth="3" /><path d="M193 362L184 363 190 369z" fill="#4d8d5b" />
      <circle cx="202" cy="371" r="4.5" fill="#f1d63c" stroke="#b59422" strokeWidth=".8" /><circle cx="201" cy="370" r="1.5" fill="#fff8c2" />
      <text x="198" y="334" fontSize="8" fill="#4c8dcf">Z</text>
      <text x="235" y="367" fontSize="8" fill="#ec5a5a">X</text>
      <text x="178" y="365" fontSize="8" fill="#56a06a">Y</text>
    </g>
  </svg>
);

/* ---------- property bar ---------- */
const PropPanel = styled.section`
  display: flex; flex: none; height: 43px; margin-top: 4px; border-top: 1px solid #a9afb6; padding-right: 5px;
  & > i { height: auto; align-self: stretch; margin: 2px 1px 2px 0; }
`;
const Commands = styled.div`
  display: grid; grid-template-columns: repeat(4, 14px); grid-auto-rows: 15px; align-content: start; padding: 3px 5px 0 0;
  background: linear-gradient(#fff, #f2f3f5);
`;
const PropMain = styled.div` display: flex; flex-direction: column; flex: 1; min-width: 0; `;
const PropStrip = styled.div`
  display: flex; align-items: center; gap: 2px; height: 23px; margin-top: 3px; padding-left: 10px;
  background: linear-gradient(#fff, #f9fafb 45%, #e1e3e6); border: 1px solid #9a9fa5;
  & > i { margin: 0; }
`;
const PropButton = styled.button<{ $on?: boolean }>`
  display: grid; place-items: center; flex: none; width: 13px; height: 13px; border: 1px solid #b3b7bc; background: #f0f1f2; color: #111; font-weight: 700; font-size: 8px;
  ${(p) => p.$on && "background: #fbd365; border-color: #d7a63d;"}
`;
const Field = styled.input<{ $w: number; $num?: boolean }>`
  flex: none; width: ${(p) => p.$w}px; height: 13px; padding: 0 2px; border: 1px solid #a9adb2; background: ${(p) => (p.$num ? "#fff" : "#f1f1f2")}; color: #111;
`;
const Split = styled.span`
  display: flex; align-items: center; flex: none; width: 28px; height: 14px; padding-left: 3px; border: 1px solid #a9adb2; background: #fbfbfb;
  button + button { margin-left: auto; width: 10px; height: 12px; background: #e1e3e5; border-left: 1px solid #a9adb2; }
`;
const PropLabel = styled.label<{ $w: number }>` flex: none; min-width: ${(p) => p.$w}px; color: #222; `;
const Spin = styled.span`
  display: flex; flex: none;
  input { border-right: 0; }
`;
const SpinButtons = styled.span`
  display: flex; flex-direction: column; width: 10px; height: 13px; border: 1px solid #a9adb2; background: #fff;
  button { flex: 1; display: grid; place-items: center; }
  button::after { content: ""; border: 2px solid transparent; }
  button:first-child { border-bottom: 1px solid #a9adb2; }
  button:first-child::after { border-bottom: 2px solid #222; border-top: 0; }
  button:last-child::after { border-top: 2px solid #222; border-bottom: 0; }
`;
const Highlight = styled.div`
  display: flex; align-items: center; gap: 2px; flex: none; height: 17px; padding: 0 1px; margin-left: -1px; border: 1px solid #5aa7dd;
  background: linear-gradient(#fde08a, #fbd158);
`;
const PropTabs = styled.div` display: flex; align-items: flex-start; gap: 4px; height: 15px; padding-left: 1px; `;
const PropTab = styled.button<{ $on?: boolean }>`
  display: flex; align-items: center; gap: 1px; height: 14px; padding: 0 1px; color: #333;
  ${(p) => p.$on && "background: #fff; border: 1px solid #b5babf; border-top: 0;"}
`;
const Status = styled.footer`
  display: flex; align-items: center; flex: none; height: 13px; padding: 1px 3px 0; color: #444; border-top: 1px solid #a3a8ad;
  background: linear-gradient(#dcdfe2, #c2c6cb);
`;
const StatusMark = styled.i` margin-left: auto; margin-right: 53px; width: 1px; height: 10px; background: #8f959c; `;

const Cross = ({ c = "#111" }: { c?: string }) => (
  <Svg $s={6} viewBox="0 0 6 6"><path d="M.5.5l5 5M5.5.5l-5 5" stroke={c} strokeWidth="1.3" /></Svg>
);
const NumberField = ({ id, w }: { id: string; w: number }) => (
  <>
    <Spin>
      <Field id={id} $w={w} $num defaultValue="0.0" />
      <SpinButtons><button aria-label="Больше" /><button aria-label="Меньше" /></SpinButtons>
    </Spin>
    <PropButton>±</PropButton>
  </>
);
const PB = ({ n, on }: { n: string; on?: boolean }) => <PropButton $on={on} aria-label={n}><Icon n={n} s={11} /></PropButton>;
const SplitButton = ({ n }: { n: string }) => (
  <Split><button aria-label={n}><Icon n={n} s={11} /></button><Drop aria-label="Список" /></Split>
);

const menus: [string, string, string][] = [
  ["", "Ф", "айл"], ["", "Р", "едактор"], ["В", "ы", "делить"], ["", "В", "ид"], ["Опера", "ц", "ии"],
  ["С", "п", "ецификация"], ["С", "е", "рвис"], ["", "О", "кно"], ["", "С", "правка"], ["", "Б", "иблиотеки"],
];
const railSmall = ["*blueCube", "curve", "diamond", "dots", "orbit", "compass", "filter", "docs", "window", "measure", "elbow"];
const railMain = ["*shell", "fillet", "draft", "rib", "loft", "box", "pen", "grayCubes", "cubes", "copies", "copiesGray"];
const withMore = ["extrude", "revolve", "boolean", "fillet", "draft", "pen", "copiesGray", "lock"];
const tree = [["origin", "(т)Начало координат"], ["sketchTree", "(-) Эскиз:1"], ["redCube", "Операция выдавливания:1"], ["fillet", "Скругление:1"]];
const commands = ["enter", "stop", "frame", "bodyTool", "flash", "contour", "slashBox", "helpBox"];
const faceText = "Грань.Операция выдавливания:1";

const RailItems = ({ items, small }: { items: string[]; small?: boolean }) => (
  <>
    {items.map((t) => {
      const n = t.replace("*", "");
      return (
        <RailTool key={n} $small={small} $on={t !== n} $more={withMore.includes(n)} aria-label={n}>
          <Icon n={n} s={small ? 10 : 12} />
        </RailTool>
      );
    })}
  </>
);

export default function App() {
  return (
    <Window>
      <Global />
      <TitleBar>
        <Icon n="logo" s={10} />
        <span>КОМПАС-3D V15.2&nbsp; x64 - Деталь БЕЗ ИМЕНИ1</span>
        <WinControls>
          <WinButton aria-label="Свернуть"><Svg $s={8} viewBox="0 0 8 8"><path d="M.5 3.5h7v3h-7z" fill="#fff" stroke="#556" /></Svg></WinButton>
          <WinButton aria-label="Развернуть"><Svg $s={8} viewBox="0 0 8 8"><path d="M2.5.5h5v5h-5zM.5 2.5h5v5h-5z" fill="#fff" stroke="#556" /></Svg></WinButton>
          <WinButton $close aria-label="Закрыть"><Cross c="#fff" /></WinButton>
        </WinControls>
      </TitleBar>
      <MenuBar>
        <Grip />
        <MenuList>
          {menus.map(([a, u, b]) => <MenuButton key={a + u + b}>{a}<u>{u}</u>{b}</MenuButton>)}
        </MenuList>
      </MenuBar>
      <ToolRow>
        <Toolbar>
          <Grip />
          <Tools list="newDoc v open save | print v | preview v | cut copy paste || brush table || undo redo || manager lib fx || percent || help" />
          <Cap aria-label="Параметры панели" />
        </Toolbar>
        <Toolbar>
          <Grip />
          <Tools list="zoomWin | zoomPage | zoomPm" />
          <Combo w={43} label="Масштаб" value="2.1279" />
          <Tools list="|| rotate axes v || wire1 wire2 wire3 shaded *shadedEdge || light v lightCube v || yellowCube section v | *simplify | plane" />
          <Cap aria-label="Параметры панели" />
        </Toolbar>
      </ToolRow>
      <ToolRow>
        <Toolbar>
          <Grip />
          <Tools list="step" />
          <Combo w={39} label="Шаг курсора" value="1.0" />
          <Tools list="*snaps | layers" />
          <Combo w={84} label="Слой" value="Системный слой (0)" />
          <Tools list="| sketch sketchGray || lcs | bodies" />
          <Combo w={84} label="Тело" value="Деталь (Тел-1)" />
          <Cap aria-label="Параметры панели" />
        </Toolbar>
        <Toolbar>
          <Grip />
          <Tools list="hatch v || face v || grayA v || grayB || grayC v" />
          <Cap aria-label="Параметры панели" />
        </Toolbar>
      </ToolRow>
      <Body>
        <Rail>
          <Grip $h />
          <RailGroup><RailItems small items={railSmall} /></RailGroup>
          <RailSep />
          <RailGroup><RailItems items={["extrude", "revolve", "cutout"]} /></RailGroup>
          <RailSep />
          <RailGroup><RailItems items={["boolean"]} /></RailGroup>
          <RailSep />
          <RailGroup $grow><RailItems items={railMain} /></RailGroup>
          <RailSep />
          <RailGroup><RailItems items={["lock"]} /></RailGroup>
          <RailSep />
          <RailEnd><i /><i /><i /></RailEnd>
        </Rail>
        <Work>
          <TabStrip>
            <DocTab><Icon n="part" s={11} />Деталь БЕЗ ИМЕНИ1<CloseX aria-label="Закрыть документ"><Cross /></CloseX></DocTab>
            <StripMenu aria-label="Список документов" />
          </TabStrip>
          <Doc>
            <TreePanel>
              <PanelHead>
                Дерево модели
                <CloseX aria-label="Закрепить"><Svg $s={7} viewBox="0 0 7 7"><path d="M2 0h3v4H2zM1 4h5M3.5 4v3" fill="none" stroke="#222" /></Svg></CloseX>
                <Cross />
              </PanelHead>
              <TreeTools><Tools list="treeA treeB v || *treeC treeD" /></TreeTools>
              <TreeBox>
                <Tree>
                  <TreeItem>Деталь (Тел-1)</TreeItem>
                  {tree.map(([n, t]) => <TreeItem key={n} $on={n === "redCube"}><Icon n={n} s={11} /><span>{t}</span></TreeItem>)}
                  <TreeEnd />
                </Tree>
                <HScroll><ScrollArrow aria-label="Влево" /><Track><Thumb aria-label="Прокрутка" /></Track><ScrollArrow $right aria-label="Вправо" /></HScroll>
              </TreeBox>
              <Preview />
              <PanelTabs><PanelTab $on>Построение</PanelTab><PanelTab>Исполнения</PanelTab><PanelTab>Зоны</PanelTab></PanelTabs>
            </TreePanel>
            <View><Scene /></View>
          </Doc>
          <PropPanel>
            <Grip />
            <Commands>
              {commands.map((n) => <Tool key={n} aria-label={n}><Icon n={n} s={11} /></Tool>)}
            </Commands>
            <PropMain>
              <PropStrip>
                <PB n="treeSel" on /><PB n="treeSel2" /><PB n="cylinder" />
                <Sep />
                <PB n="pie" /><Field aria-label="Грань" $w={63} defaultValue={faceText} />
                <PB n="diag" /><Field aria-label="Направление" $w={63} defaultValue={faceText} />
                <SplitButton n="faceSel" /><Sep /><SplitButton n="planeSel" />
                <PB n="goldBox" on />
                <PropLabel $w={26} htmlFor="face">Гр<u>а</u>нь 1</PropLabel>
                <Field id="face" $w={63} defaultValue={faceText} />
                <PB n="faceDoc" /><PB n="faceGold" on />
                <Highlight>
                  <PropLabel $w={46} htmlFor="dist">Расстояние <u>1</u></PropLabel>
                  <NumberField id="dist" w={22} />
                </Highlight>
                <PB n="faceDir" on /><PB n="faceAngle" />
                <PropLabel $w={24} htmlFor="angle"><u>У</u>гол 1</PropLabel>
                <NumberField id="angle" w={32} />
              </PropStrip>
              <PropTabs>
                <PropTab $on><Icon n="shell" s={11} />Параметры</PropTab>
                <PropTab><Icon n="thin" s={11} />Тонкая стенка</PropTab>
                <PropTab><Icon n="minusBody" s={11} />Вырезание</PropTab>
                <PropTab><Icon n="props" s={11} />Свойства</PropTab>
              </PropTabs>
            </PropMain>
          </PropPanel>
        </Work>
      </Body>
      <Status>Создайте операцию или отредактируйте параметры<StatusMark /></Status>
    </Window>
  );
}
